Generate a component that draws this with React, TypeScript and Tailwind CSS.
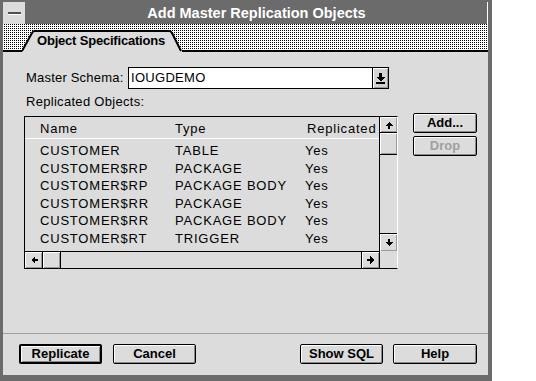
import React from "react";

type Dir = "up" | "down" | "left" | "right";

function Arrow({ dir }: { dir: Dir }) {
  const rot = { down: 0, up: 180, left: 90, right: 270 }[dir];
  return (
    <svg width="8" height="8" viewBox="0 0 8 8" shapeRendering="crispEdges">
      <path d="M3 0H5V3H8L4 7L0 3H3Z" fill="#000" transform={`rotate(${rot} 4 4)`} />
    </svg>
  );
}

function ScrollBtn({ dir, className }: { dir: Dir; className: string }) {
  return (
    <div
      className={`flex items-center justify-center bg-[#dcdcdc] shadow-[inset_1px_1px_0_#fff,inset_-1px_-1px_0_#9a9a9a] ${className}`}
    >
      <Arrow dir={dir} />
    </div>
  );
}

function Btn({
  label,
  w,
  def,
  disabled,
}: {
  label: string;
  w: string;
  def?: boolean;
  disabled?: boolean;
}) {
  return (
    <div
      className={`${w} h-[20px] flex items-center justify-center rounded-[2px] bg-[#dcdcdc] shadow-[inset_1px_1px_0_#fff,inset_-1px_-1px_0_#8a8a8a] text-[13px] font-bold ${
        def ? "border-2 border-black" : "border border-black"
      } ${disabled ? "text-[#a0a0a0]" : "text-black"}`}
    >
      {label}
    </div>
  );
}

const rows: [string, string, string][] = [
  ["CUSTOMER", "TABLE", "Yes"],
  ["CUSTOMER$RP", "PACKAGE", "Yes"],
  ["CUSTOMER$RP", "PACKAGE BODY", "Yes"],
  ["CUSTOMER$RR", "PACKAGE", "Yes"],
  ["CUSTOMER$RR", "PACKAGE BODY", "Yes"],
  ["CUSTOMER$RT", "TRIGGER", "Yes"],
];

export default function App() {
  return (
    <div className="w-[536px] h-[381px] bg-white font-['Liberation_Sans',Arial,sans-serif] text-black">
      <div className="w-[492px] h-[381px] flex flex-col border-l-[3px] border-r-[4px] border-t-[2px] border-b-[6px] border-[#6b6b6b] bg-[#dcdcdc]">
        {/* Title bar */}
        <div className="h-[22px] flex bg-[#6b6b6b] border-r border-white shrink-0">
          <div className="w-[23px] h-full bg-[#dcdcdc] border-r border-[#6b6b6b] flex items-center justify-center">
            <div className="w-[13px] h-[3px] bg-[#505050] border-b border-white" />
          </div>
          <div className="flex-1 flex items-center justify-center text-white font-bold text-[14.5px] leading-none">
            Add Master Replication Objects
          </div>
        </div>

        {/* Tab strip */}
        <div className="h-[28px] flex shrink-0 bg-[#fff] bg-[image:conic-gradient(#000_25%,#fff_0)] bg-[length:2px_2px]">
          <div className="w-[19px] h-full border-b-2 border-black" />
          <div className="relative w-[160px] h-full">
            <svg className="absolute inset-0" width="160" height="28" viewBox="0 0 160 28">
              <path d="M0 28 L0 27 L10 9 Q11 7 13 7 L147 7 Q149 7 150 9 L159 27 L160 28 Z" fill="#dcdcdc" />
              <path
                d="M0 27 L10 9 Q11 7 13 7 L147 7 Q149 7 150 9 L159 27"
                fill="none"
                stroke="#000"
                strokeWidth="2"
              />
            </svg>
            <div className="relative pt-[9px] pl-[15px] text-[13px] font-bold leading-[16px] tracking-[-0.2px]">
              Object Specifications
            </div>
          </div>
          <div className="flex-1 h-full border-b-2 border-black" />
        </div>

        {/* Content */}
        <div className="flex-1 flex flex-col">
          <div className="flex-1 pl-[21px] pt-[15px] flex flex-col">
            <div className="flex items-center h-[22px]">
              <div className="w-[104px] pl-[2px] text-[13px] tracking-[0.2px]">Master Schema:</div>
              <div className="flex h-[22px] border border-black">
                <div className="w-[243px] h-full bg-white pl-[2px] flex items-center text-[13px] tracking-[0.3px]">
                  IOUGDEMO
                </div>
                <div className="w-[16px] h-full border-l border-black bg-[#d4d4d4] shadow-[inset_1px_1px_0_#fff,inset_-1px_-1px_0_#9a9a9a] flex items-center justify-center">
                  <svg width="9" height="11" viewBox="0 0 9 11" shapeRendering="crispEdges">
                    <path d="M3 0H6V4H9L4.5 8.5L0 4H3Z" fill="#000" />
                    <rect x="0" y="9" width="9" height="2" fill="#000" />
                  </svg>
                </div>
              </div>
            </div>

            <div className="mt-[5px] pl-[2px] text-[13px] leading-[16px] tracking-[0.3px]">
              Replicated Objects:
            </div>

            <div className="mt-[6px] flex items-start">
              {/* Table */}
              <div className="w-[374px] h-[153px] border-t border-l border-b border-black border-r border-r-white flex flex-col">
                <div className="h-[134px] flex">
                  <div className="flex-1 text-[13px] tracking-[0.8px]">
                    <div className="h-[22px] border-b border-white flex pt-[4px] leading-[16px]">
                      <div className="w-[150px] pl-[15px]">Name</div>
                      <div className="w-[130px]">Type</div>
                      <div className="pl-[2px]">Replicated</div>
                    </div>
                    <div className="pt-[3px]">
                      {rows.map((r, i) => (
                        <div key={i} className="h-[17.5px] leading-[17.5px] flex">
                          <div className="w-[150px] pl-[15px]">{r[0]}</div>
                          <div className="w-[130px]">{r[1]}</div>
                          <div>{r[2]}</div>
                        </div>
                      ))}
                    </div>
                  </div>
                  <div className="w-[18px] border-l border-black flex flex-col">
                    <ScrollBtn dir="up" className="h-[16px] border-b border-black" />
                    <div className="h-[22px] bg-[#dcdcdc] border-b border-black shadow-[inset_1px_1px_0_#fff,inset_-1px_-1px_0_#9a9a9a]" />
                    <div className="flex-1" />
                    <ScrollBtn dir="down" className="h-[18px] border-t border-black" />
                  </div>
                </div>
                <div className="flex-1 flex">
                  <div className="flex-1 flex border-t border-black border-r">
                    <ScrollBtn dir="left" className="w-[18px] border-r border-black" />
                    <div className="w-[18px] bg-[#dcdcdc] border-r border-black shadow-[inset_1px_1px_0_#fff,inset_-1px_-1px_0_#9a9a9a]" />
                    <div className="flex-1" />
                    <ScrollBtn dir="right" className="w-[18px] border-l border-black" />
                  </div>
                  <div className="w-[17px]" />
                </div>
              </div>

              {/* Side buttons */}
              <div className="ml-[15px] -mt-[3px] flex flex-col gap-[3px]">
                <Btn label="Add..." w="w-[64px]" />
                <Btn label="Drop" w="w-[64px]" disabled />
              </div>
            </div>
          </div>

          <div className="h-px bg-[#a0a0a0]" />
          <div className="h-[41px] pt-[10px] pl-[16px] pr-[11px] flex items-start">
            <Btn label="Replicate" w="w-[83px]" def />
            <div className="w-[11px]" />
            <Btn label="Cancel" w="w-[83px]" />
            <div className="flex-1" />
            <Btn label="Show SQL" w="w-[83px]" />
            <div className="w-[10px]" />
            <Btn label="Help" w="w-[84px]" />
          </div>
        </div>
      </div>
    </div>
  );
}
